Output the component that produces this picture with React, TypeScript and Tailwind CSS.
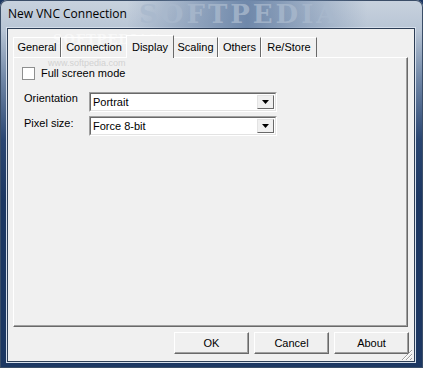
import React from "react";

const tabs = [
  { label: "General", w: "w-[48px]" },
  { label: "Connection", w: "w-[66px]" },
  { label: "Display", w: "w-[48px]", active: true },
  { label: "Scaling", w: "w-[45px]" },
  { label: "Others", w: "w-[43px]" },
  { label: "Re/Store", w: "w-[56px]" },
];

function Combo({ value }: { value: string }) {
  return (
    <div className="flex h-[20px] w-[188px] border border-t-[#a0a0a0] border-l-[#a0a0a0] border-r-white border-b-white">
      <div className="flex flex-1 items-center justify-between border border-t-[#696969] border-l-[#696969] border-r-[#e3e3e3] border-b-[#e3e3e3] bg-white pl-[2px] pr-[1px]">
        <span className="text-[11px] leading-none text-black">{value}</span>
        <div className="flex h-[14px] w-[17px] items-center justify-center border border-t-[#e3e3e3] border-l-[#e3e3e3] border-r-[#696969] border-b-[#696969] bg-[#f0f0f0]">
          <svg width="7" height="4" viewBox="0 0 7 4">
            <path d="M0 0h7L3.5 4z" fill="#000" />
          </svg>
        </div>
      </div>
    </div>
  );
}

function Button({ label }: { label: string }) {
  return (
    <div className="flex h-[22px] w-[75px] items-center justify-center border border-t-white border-l-white border-r-[#696969] border-b-[#696969] bg-[#f0f0f0] text-[11px] text-black shadow-[inset_-1px_-1px_0_#a0a0a0]">
      {label}
    </div>
  );
}

export default function App() {
  return (
    <div className="h-[368px] w-[423px] overflow-hidden bg-[#1c3762] font-['Liberation_Sans',Arial,sans-serif]">
      <div className="flex h-full w-full flex-col rounded-t-[7px] [background-image:linear-gradient(180deg,#c8d2de_0px,#b8c5d5_30px,#6f86a6_80px,#2a4672_140px,#1c3762_200px)] pl-[7px] pr-[8px] pb-[6px] pt-[28px] shadow-[inset_0_0_0_1px_#3b4e68]">
        <div className="relative -mt-[28px] flex h-[28px] items-center pl-[1px]">
          <div className="pointer-events-none absolute left-[120px] top-0 h-[28px] w-[240px] [background-image:linear-gradient(90deg,transparent,#6f88aa,transparent)]" />
          <span className="pointer-events-none absolute left-[132px] top-0 font-['DejaVu_Serif',serif] text-[26px] leading-[28px] font-bold tracking-[3px] text-[#a9b9cd]/80">
            SOFTPEDIA
          </span>
          <span className="relative font-['Open_Sans','Noto_Sans',sans-serif] text-[12px] text-black">
            New VNC Connection
          </span>
        </div>
        <div className="flex flex-1 flex-col border border-[#2c3d55] bg-[#f0f0f0] shadow-[0_0_0_1px_#d6dfeb]">
          <div className="relative ml-[5px] mt-[6px] flex h-[22px] items-end">
            <span className="pointer-events-none absolute left-[40px] top-[-5px] font-['DejaVu_Serif',serif] text-[13px] font-bold tracking-[1px] text-white/50">
              SOFTPEDIA™
            </span>
            {tabs.map((t) =>
              t.active ? (
                <div
                  key={t.label}
                  className={`relative z-10 -mx-[1px] -mb-[1px] flex h-[23px] items-start justify-center border-l border-t border-r border-l-white border-t-white border-r-[#696969] bg-[#f0f0f0] pt-[3px] text-[11px] text-black ${t.w}`}
                >
                  {t.label}
                </div>
              ) : (
                <div
                  key={t.label}
                  className={`relative flex h-[20px] items-center justify-center border-l border-t border-r border-l-white border-t-white border-r-[#696969] text-[11px] text-black ${t.w}`}
                >
                  {t.label}
                </div>
              )
            )}
          </div>
          <div className="relative ml-[5px] mr-[6px] h-[270px] border border-t-white border-l-white border-r-[#696969] border-b-[#696969] shadow-[inset_-1px_-1px_0_#a0a0a0]">
            <span className="pointer-events-none absolute left-[34px] top-[0px] text-[9px] leading-[10px] text-[#d2d2d2]">
              www.softpedia.com
            </span>
            <div className="relative flex flex-col pl-[8px] pt-[9px]">
              <label className="flex items-center gap-[6px]">
                <span className="h-[13px] w-[13px] border border-[#8e8f8f] bg-white" />
                <span className="text-[11px] leading-[13px] text-black">Full screen mode</span>
              </label>
              <div className="mt-[12px] flex items-start">
                <span className="w-[67px] pl-[2px] text-[11px] leading-[13px] text-black">Orientation</span>
                <Combo value="Portrait" />
              </div>
              <div className="mt-[4px] flex items-start">
                <span className="w-[67px] pl-[2px] pt-[1px] text-[11px] leading-[13px] text-black">Pixel size:</span>
                <Combo value="Force 8-bit" />
              </div>
            </div>
          </div>
          <div className="relative mt-[5px] flex justify-end gap-[5px] pr-[5px]">
            <Button label="OK" />
            <Button label="Cancel" />
            <Button label="About" />
            <svg className="absolute bottom-[-7px] right-[1px]" width="13" height="13" viewBox="0 0 13 13">
              <g strokeWidth="1">
                <path d="M12 2L2 12" stroke="#a0a0a0" />
                <path d="M12 3L3 12" stroke="#ffffff" />
                <path d="M12 6L6 12" stroke="#a0a0a0" />
                <path d="M12 7L7 12" stroke="#ffffff" />
                <path d="M12 10L10 12" stroke="#a0a0a0" />
              </g>
            </svg>
          </div>
        </div>
      </div>
    </div>
  );
}
